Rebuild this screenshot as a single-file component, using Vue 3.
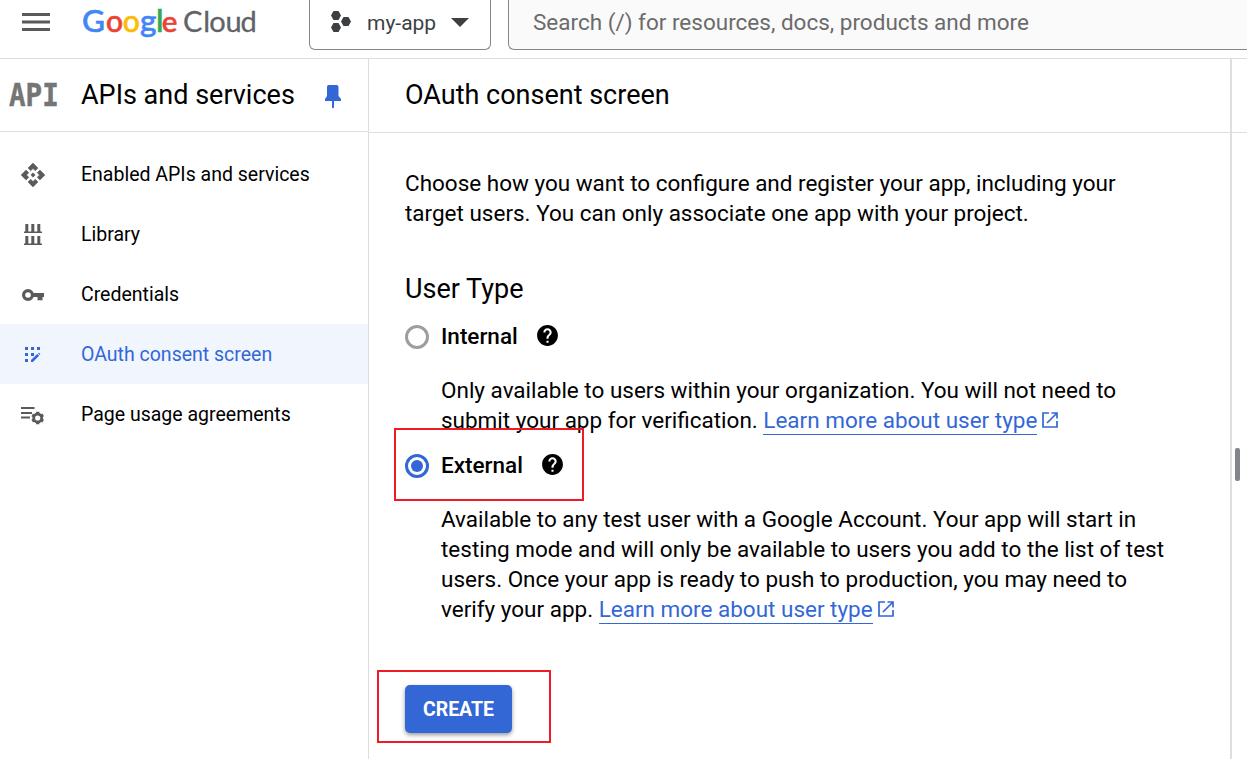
<script setup>
const nav = [
  { label: 'Enabled APIs and services', icon: 'api' },
  { label: 'Library', icon: 'library' },
  { label: 'Credentials', icon: 'key' },
  { label: 'OAuth consent screen', icon: 'consent', active: true },
  { label: 'Page usage agreements', icon: 'agreements' },
]
const helpPath = 'M12 2C6.48 2 2 6.48 2 12s4.48 10 10 10 10-4.48 10-10S17.52 2 12 2zm1 17h-2v-2h2v2zm2.07-7.75l-.9.92C13.45 12.9 13 13.5 13 15h-2v-.5c0-1.1.45-2.1 1.17-2.83l1.24-1.26c.37-.36.59-.86.59-1.41 0-1.1-.9-2-2-2s-2 .9-2 2H8c0-2.21 1.79-4 4-4s4 1.79 4 4c0 .88-.36 1.68-.93 2.25z'
</script>

<template>
  <div class="page">
    <header class="topbar">
      <svg class="menu" width="28" height="20" viewBox="0 0 28 20"><path d="M0 1h28v3H0zM0 8.500h28v3H0zM0 16h28v3H0z" fill="#5a5a5a" /></svg>
      <svg class="logo" width="190" height="50" viewBox="0 0 190 50">
        <g font-family="Lato, sans-serif" font-size="31.500" font-weight="500" stroke-width="0.600">
          <text x="6.900" y="32.300" fill="#4285f4" stroke="#4285f4">G</text>
          <text x="31" y="32.300" font-size="30" fill="#ea4335" stroke="#ea4335">o</text>
          <text x="47.700" y="32.300" font-size="30" fill="#fbbc04" stroke="#fbbc04">o</text>
          <text x="65" y="32.300" fill="#4285f4" stroke="#4285f4">g</text>
          <text x="81" y="32.300" fill="#34a853" stroke="#34a853">l</text>
          <text x="86.700" y="32.300" font-size="29.500" fill="#ea4335" stroke="#ea4335">e</text>
        </g>
        <text x="108 128.300 134.300 150.500 165.500" y="32.300" font-family="Lato, sans-serif" font-size="29" fill="#5f6368" stroke="#5f6368" stroke-width="0.300">Cloud</text>
      </svg>
      <div class="project">
        <svg width="22" height="24" viewBox="0 0 22 24" fill="#3c4043"><path d="M3.500 1h5l2.500 4.500-2.500 4.500h-5L1 5.500zM3.500 13h5l2.500 4.500-2.500 4.500h-5L1 17.500zM13.500 7h5l2.500 4.500-2.500 4.500h-5L11 11.500z" /></svg>
        <span>my-app</span>
        <svg class="caret" width="18" height="10" viewBox="0 0 18 10"><path d="M0 0h18L9 9z" fill="#3c4043" /></svg>
      </div>
      <div class="search">Search (/) for resources, docs, products and more</div>
    </header>

    <div class="body">
      <aside class="sidebar">
        <div class="side-head">
          <span class="api-mark"><span>API</span></span>
          <h2>APIs and services</h2>
          <svg class="pin" width="18" height="24" viewBox="0 0 18 24" fill="#3367d6"><path d="M4.500 0h8q2 0 2 2v9l2.500 3v2H10v6.500L9 23.500 8 22.500V16H1v-2l2-3V2q0-2 1.500-2z" /></svg>
        </div>
        <nav>
          <a v-for="item in nav" :key="item.label" :class="{ active: item.active }">
            <span class="nav-icon">
              <svg v-if="item.icon === 'api'" width="26" height="26" viewBox="0 0 24 24" fill="currentColor" stroke="currentColor" stroke-width="0.500"><path d="M14 12l-2 2-2-2 2-2 2 2zm-2-6l2.120 2.120 2.500-2.500L12 1 7.380 5.620l2.500 2.500L12 6zm-6 6l2.120-2.120-2.500-2.500L1 12l4.620 4.620 2.500-2.500L6 12zm12 0l-2.120 2.120 2.500 2.500L23 12l-4.620-4.620-2.500 2.500L18 12zm-6 6l-2.120-2.120-2.500 2.500L12 23l4.620-4.620-2.500-2.500L12 18z" /></svg>
              <svg v-else-if="item.icon === 'library'" width="18" height="21" viewBox="0 0 18 21" fill="currentColor"><path d="M1.300 0h3v7.500h3V0h3v7.500h3V0h3v7.500H18V9H0V7.500h1.300zM1.300 12h3v7.500h3V12h3v7.500h3V12h3v7.500H18V21H0v-1.500h1.300z" /></svg>
              <svg v-else-if="item.icon === 'key'" width="22" height="14" viewBox="0 0 22 14"><circle cx="6" cy="7" r="4.400" fill="none" stroke="currentColor" stroke-width="3.200" /><path d="M11 5h11v4h-1.500v3.200H15.500V9H11z" fill="currentColor" /></svg>
              <svg v-else-if="item.icon === 'consent'" width="16" height="16" viewBox="0 0 16 16" fill="currentColor"><path d="M0 0h3v3H0zM6 0h3v3H6zM12 0h3v3h-3zM0 6h3v3H0zM6 6h3v3H6zM0 12h3v3H0zM6 13.100l6.200-6.200 1.900 1.900L7.900 15H6zM12.900 6.300l.4-.4q.5-.3.900.1l.9.900q.3.400 0 .8l-.4.400z" /></svg>
              <svg v-else width="24" height="20" viewBox="0 0 24 20"><path d="M0 2h13.500v2H0zM0 7h11v2H0zM0 11.500h9v2H0z" fill="currentColor" /><circle cx="16.700" cy="13" r="4" fill="none" stroke="currentColor" stroke-width="2.800" /><g stroke="currentColor" stroke-width="3.200"><path d="M16.700 6.700v2.300M16.700 17v2.300M11.200 9.800l2 1.200M20.200 15l2 1.200M11.200 16.200l2-1.200M20.200 11l2-1.200" /></g></svg>
            </span>
            {{ item.label }}
          </a>
        </nav>
      </aside>

      <main>
        <h1>OAuth consent screen</h1>
        <div class="content">
          <p class="intro">Choose how you want to configure and register your app, including your<br />target users. You can only associate one app with your project.</p>
          <h3>User Type</h3>
          <div class="option">
            <span class="radio"></span><b>Internal</b>
            <svg class="help" width="25" height="25" viewBox="0 0 24 24"><path :d="helpPath" /></svg>
          </div>
          <p class="desc">Only available to users within your organization. You will not need to<br />submit your app for verification. <a>Learn more about user type</a><svg class="ext" width="16" height="16" viewBox="0 0 16 16" fill="none" stroke="#3367d6" stroke-width="1.700"><path d="M7 1H1v14h14V9M9.500 1H15v5.500M15 1L5 11" /></svg></p>
          <div class="option external">
            <span class="radio on"></span><b>External</b>
            <svg class="help" width="25" height="25" viewBox="0 0 24 24"><path :d="helpPath" /></svg>
            <i class="mark mark-option"></i>
          </div>
          <p class="desc">Available to any test user with a Google Account. Your app will start in<br />testing mode and will only be available to users you add to the list of test<br />users. Once your app is ready to push to production, you may need to<br />verify your app. <a>Learn more about user type</a><svg class="ext" width="16" height="16" viewBox="0 0 16 16" fill="none" stroke="#3367d6" stroke-width="1.700"><path d="M7 1H1v14h14V9M9.500 1H15v5.500M15 1L5 11" /></svg></p>
          <div class="action"><button>CREATE</button><i class="mark mark-create"></i></div>
        </div>
      </main>
      <div class="panel"><span></span></div>
    </div>
  </div>
</template>

<style>
body { overflow: hidden; }
</style>
<style scoped>
* { box-sizing: border-box; }
.page { width: 1247px; height: 759px; overflow: hidden; background: #fff; color: #000; font-family: Roboto, sans-serif; display: flex; flex-direction: column; }
h1, h2, h3, p { margin: 0; font-weight: 400; }
svg { display: block; flex: none; }
.topbar { height: 59px; flex: none; border-bottom: 1px solid #dedede; display: flex; align-items: flex-start; }
.menu { margin: 12px 0 0 22px; }
.logo { margin-left: 25px; }
.project { margin-left: 44px; width: 182px; height: 50px; border: 1px solid #80868b; border-top: 0; border-radius: 0 0 6px 6px; display: flex; align-items: center; padding: 0 0 5px 20px; font-size: 21px; color: #3c4043; }
.project span { width: 70px; margin: 2px 14px 0 15px; white-space: nowrap; }
.caret { margin-top: 2px; }
.search { margin-left: 17px; flex: 1; height: 50px; border: 1px solid #80868b; border-top: 0; border-right: 0; border-radius: 0 0 0 6px; background: #fafafa; padding: 0 0 0 24px; line-height: 45px; font-size: 22.500px; color: #6b6b6b; white-space: nowrap; }
.body { flex: 1; display: flex; min-height: 0; }
.sidebar { width: 369px; border-right: 1px solid #dedede; }
.side-head { height: 73px; border-bottom: 1px solid #dedede; display: flex; align-items: center; padding-left: 9px; }
.api-mark { width: 50px; height: 40px; flex: none; line-height: 40px; color: #757575; font-family: "DejaVu Sans Mono", monospace; font-weight: 700; font-size: 32px; }
.api-mark span { display: inline-block; transform: scaleX(.86); transform-origin: 0 50%; -webkit-text-stroke: .5px #757575; }
.side-head h2 { width: 215px; margin-left: 22px; font-size: 27px; white-space: nowrap; }
.pin { margin-left: 27.500px; margin-top: 3px; }
nav { padding-top: 12px; }
nav a { height: 60px; display: flex; align-items: center; font-size: 19.500px; color: #000; white-space: nowrap; }
.nav-icon { width: 66px; margin-right: 15px; color: #5a5a5a; display: flex; justify-content: center; padding-top: 1px; }
.active { background: #f0f5fe; }
nav a.active, .active .nav-icon { color: #3367d6; }
main { width: 861px; }
h1 { height: 74px; border-bottom: 1px solid #dedede; padding-left: 36px; line-height: 72px; font-size: 27px; }
.content { padding: 35px 0 0 36px; font-size: 22.490px; line-height: 30px; white-space: nowrap; }
h3 { margin-top: 45px; height: 32px; line-height: 32px; font-size: 27px; }
.option { height: 30px; margin-top: 16px; display: flex; align-items: center; position: relative; }
.option.external { margin-top: 15px; }
.option b { font-weight: 500; margin-left: 12px; }
.radio { width: 24px; height: 24px; margin-top: 2px; border: 3px solid #9e9e9e; border-radius: 50%; display: flex; }
.radio.on { border-color: #3367d6; }
.radio.on::after { content: ''; width: 12px; height: 12px; margin: 3px; border-radius: 50%; background: #3367d6; }
.help { margin: -1px 0 0 17px; }
.desc { margin: 24px 0 0 36px; }
.desc a { color: #3367d6; border-bottom: 1px solid #3367d6; padding-bottom: 1px; }
.ext { display: inline-block; margin-left: 5px; vertical-align: 0; }
.mark { position: absolute; border: 2px solid #ed1c24; pointer-events: none; }
.mark-option { left: -11px; top: -22px; width: 190px; height: 73px; }
.action { position: relative; margin-top: 61px; }
.mark-create { left: -28px; top: -15px; width: 174px; height: 73px; }
button { display: block; width: 107px; height: 48px; padding: 0; border: 0; border-radius: 5px; background: #3367d6; color: #fff; font: 700 19.500px Roboto, sans-serif; box-shadow: 0 2px 4px rgba(0, 0, 0, .4); }
.panel { flex: 1; border-left: 2px solid #dedede; position: relative; }
.panel::before { content: ''; display: block; height: 74px; border-bottom: 1px solid #dedede; box-sizing: border-box; }
.panel span { position: absolute; left: 3px; top: 389px; width: 5px; height: 33px; border-radius: 2px; background: #80868b; }
</style>
